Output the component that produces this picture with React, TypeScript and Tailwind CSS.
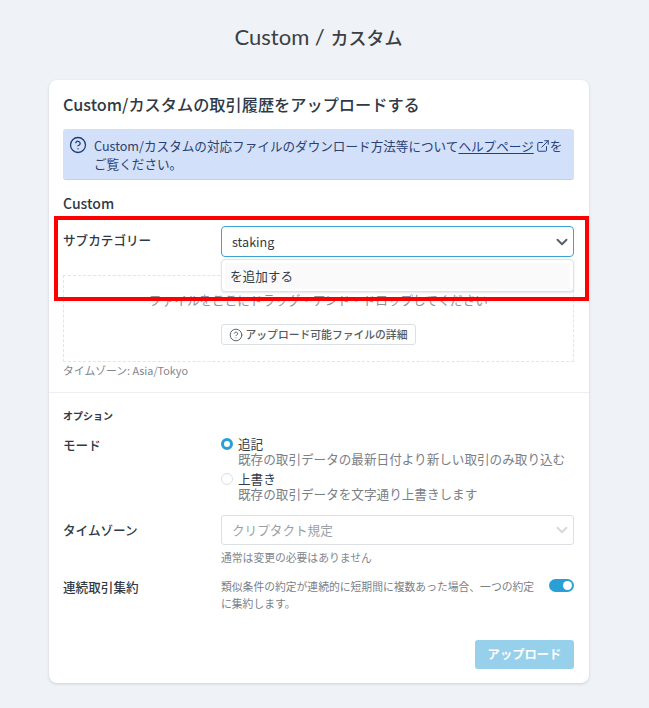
import React from 'react';
import { ChevronDown, CircleHelp, ExternalLink } from 'lucide-react';

const font = { fontFamily: '"Noto Sans CJK JP", "Noto Sans", sans-serif' };

export default function App() {
  return (
    <div className="relative h-[708px] w-[649px] overflow-hidden bg-[#eff3f7] text-[#333b46]" style={font}>
      <h1 className="flex h-[80px] items-start justify-center pt-[23px] text-[22px] leading-[28px] font-normal text-[#3c3f44]">
        <span className="mr-[12px]" style={{ fontFamily: 'Lato, "Noto Sans CJK JP", sans-serif' }}>
          Custom / <span className="text-[18px] font-medium">カスタム</span>
        </span>
      </h1>

      <div className="ml-[49px] h-[603px] w-[540px] rounded-lg bg-white pr-[15px] pl-[14px] shadow-[0_1px_3px_rgba(0,0,0,0.15)]">
        <h2 className="pt-[12px] pb-[1px] text-[16.2px] leading-[24px] font-medium text-[#2f3a46]">Custom/カスタムの取引履歴をアップロードする</h2>

        <div className="mt-[12px] flex h-[51px] rounded-[3px] border-b border-[#c3d1ea] bg-[#d3e0f9] pt-[8px] pl-[6px] text-[12.6px] leading-[18px] text-[#2c4170]">
          <CircleHelp className="mt-[-1px] mr-[7px] h-[18px] w-[18px] shrink-0 text-[#1e3a78]" strokeWidth={1.7} />
          <p className="w-[475px]">
            Custom/カスタムの対応ファイルのダウンロード方法等について<span className="text-[#1f3f86] underline underline-offset-2">ヘルプページ</span>
            <ExternalLink className="mr-0 ml-[2px] inline h-[14px] w-[14px] align-[-2px] text-[#1f3f86]" strokeWidth={1.7} />をご覧ください。
          </p>
        </div>

        <h3 className="mt-[13px] text-[14px] leading-[20px] font-medium text-[#2f3a46]">Custom</h3>

        <div className="relative mt-[13px] flex h-[32px]">
          <label className="w-[158px] pt-[4px] text-[12.6px] leading-[20px] font-medium text-[#2f3a46]">サブカテゴリー</label>
          <div className="flex h-[31px] flex-1 items-center justify-between rounded-[4px] border border-[#3ba3d6] pr-[2px] pl-[10px] text-[12.6px] text-[#333b46]">
            <span className="pt-[1px]">staking</span>
            <ChevronDown className="h-[18px] w-[18px] text-[#5a6068]" strokeWidth={2.6} />
          </div>
          <div className="absolute top-[33px] right-0 left-[158px] z-10 h-[33px] rounded-[4px] border border-[#dfe2e6] bg-white p-[3px] shadow-[0_1px_2px_rgba(0,0,0,0.1)]">
            <div className="flex h-[26px] items-center bg-[#fafafa] pl-[5px] text-[12.6px] text-[#333b46]">を追加する</div>
          </div>
        </div>

        <div className="mt-[17px] flex h-[87px] flex-col items-center border border-dashed border-[#e1e4e8] pt-[14px]">
          <p className="text-[12.6px] leading-[20px] text-[#8d939b]">ファイルをここにドラッグ・アンド・ドロップしてください</p>
          <button className="mt-[14px] ml-[-1px] flex h-[21px] w-[195px] items-center justify-center rounded-[3px] border border-[#dcdfe3] text-[10.8px] font-medium text-[#555b63]">
            <CircleHelp className="mr-[3px] h-[14px] w-[14px]" strokeWidth={1.6} />
            アップロード可能ファイルの詳細
          </button>
        </div>
        <p className="mt-0 text-[10.8px] leading-[16px] text-[#80868e]">タイムゾーン: Asia/Tokyo</p>

        <hr className="mt-[14px] mr-[-15px] ml-[-14px] border-[#eceef0]" />

        <h4 className="mt-[15px] text-[10px] leading-[16px] font-bold text-[#2f3a46]">オプション</h4>

        <div className="mt-[12px] flex">
          <label className="w-[158px] text-[12.6px] leading-[18px] font-medium text-[#2f3a46]">モード</label>
          <div className="text-[12.6px] leading-[15px]">
            <div className="flex">
              <span className="mt-[2px] mr-[5px] h-[12px] w-[12px] rounded-full border-[3.5px] border-[#2a9fd6] bg-white" />
              <div>
                <p className="text-[#333b46]">追記</p>
                <p className="text-[#7a8088]">既存の取引データの最新日付より新しい取引のみ取り込む</p>
              </div>
            </div>
            <div className="mt-[5px] flex">
              <span className="mt-[2px] mr-[5px] h-[12px] w-[12px] rounded-full border border-[#dcdfe3] bg-white" />
              <div>
                <p className="text-[#333b46]">上書き</p>
                <p className="text-[#7a8088]">既存の取引データを文字通り上書きします</p>
              </div>
            </div>
          </div>
        </div>

        <div className="mt-[14px] flex">
          <label className="w-[158px] pt-[6px] text-[12.6px] leading-[18px] font-medium text-[#2f3a46]">タイムゾーン</label>
          <div className="flex-1">
            <div className="flex h-[30px] items-center justify-between rounded-[3px] border border-[#dcdfe3] pr-[2px] pl-[10px] text-[12.6px] text-[#9a9fa6]">
              <span>クリプタクト規定</span>
              <ChevronDown className="h-[18px] w-[18px] text-[#d5d8dc]" strokeWidth={2.6} />
            </div>
            <p className="mt-[5px] text-[10.8px] leading-[14px] text-[#80868e]">通常は変更の必要はありません</p>
          </div>
        </div>

        <div className="mt-[14px] flex">
          <label className="w-[158px] text-[12.6px] leading-[18px] font-medium text-[#2f3a46]">連続取引集約</label>
          <p className="w-[318px] text-[10.8px] leading-[17px] text-[#7a8088]">類似条件の約定が連続的に短期間に複数あった場合、一つの約定に集約します。</p>
          <span className="relative mt-[1px] ml-auto h-[13px] w-[25px] rounded-full bg-[#2a9fd6]">
            <span className="absolute top-[2px] right-[2px] h-[9px] w-[9px] rounded-full bg-white" />
          </span>
        </div>

        <div className="mt-[28px] flex justify-end">
          <button className="h-[29px] w-[99px] rounded-[3px] bg-[#97d0ea] text-[12.3px] font-bold text-white">アップロード</button>
        </div>
      </div>

      <div className="pointer-events-none absolute top-[216px] left-[54px] z-20 h-[85px] w-[535px] border-[4px] border-[#ff0000]" />
    </div>
  );
}
